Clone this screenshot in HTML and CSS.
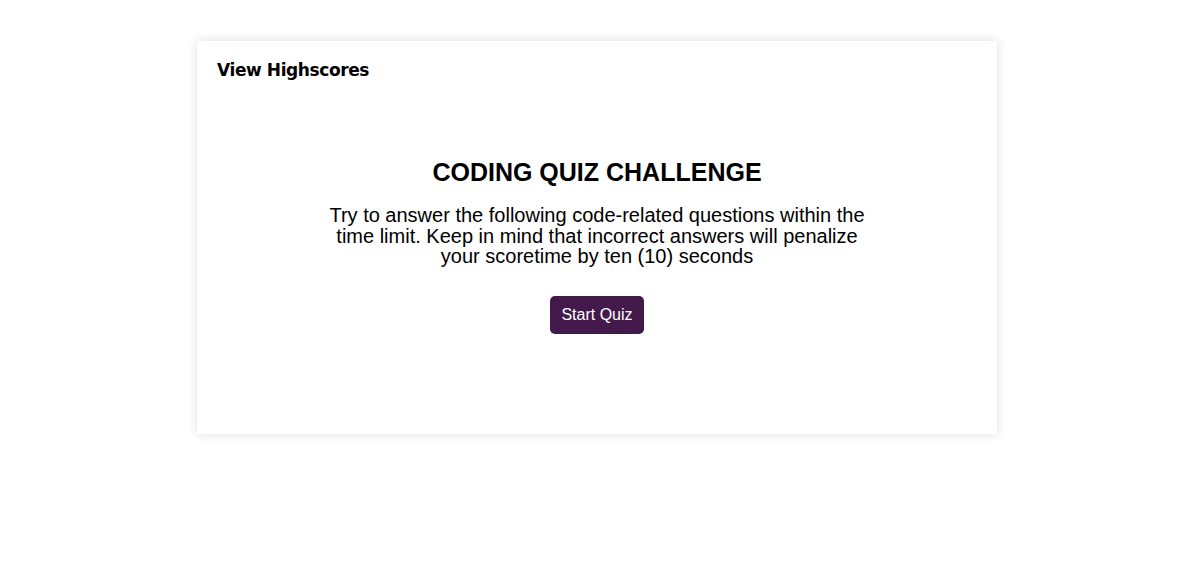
FILE: index.html
```html
<!DOCTYPE html>
<html lang="en">
<head>
<meta charset="utf-8">
<title>Coding Quiz</title>
<link rel="stylesheet" href="styles.css">
</head>
<body>
<main class="card">
  <header class="card-header">
    <a class="highscores" href="#">View Highscores</a>
  </header>
  <section class="intro">
    <h1 class="title">CODING QUIZ CHALLENGE</h1>
    <p class="desc">Try to answer the following code-related questions within the time limit. Keep in mind that incorrect answers will penalize your scoretime by ten (10) seconds</p>
    <button class="start-btn" type="button">Start Quiz</button>
  </section>
</main>
</body>
</html>
```
FILE: styles.css
```css
html, body {
  margin: 0;
  padding: 0;
  background: #ffffff;
}
body {
  font-family: "Liberation Sans", Arial, sans-serif;
  color: #000;
  padding-right: 5px;
  padding-bottom: 20px;
}
.card {
  width: 800px;
  height: 393px;
  margin: 41px auto 0;
  box-sizing: border-box;
  background: #fff;
  box-shadow: 0 0 10px rgba(0, 0, 0, 0.14);
  display: flex;
  flex-direction: column;
}
.card-header {
  padding: 19px 20px 0;
}
.highscores {
  font-family: "DejaVu Sans", Verdana, sans-serif;
  font-weight: bold;
  font-size: 17px;
  color: #000;
  text-decoration: none;
  letter-spacing: -0.4px;
}
.intro {
  display: flex;
  flex-direction: column;
  align-items: center;
  text-align: center;
  padding-top: 77px;
}
.title {
  margin: 0;
  font-size: 25px;
  font-weight: bold;
  line-height: 30px;
}
.desc {
  margin: 18px 0 0;
  width: 560px;
  font-size: 20px;
  line-height: 20.5px;
}
.start-btn {
  margin-top: 29px;
  padding: 0 11px;
  height: 38px;
  background: #43184b;
  color: #fff;
  border: none;
  border-radius: 5px;
  font-family: "Liberation Sans", Arial, sans-serif;
  font-size: 16px;
}
```
